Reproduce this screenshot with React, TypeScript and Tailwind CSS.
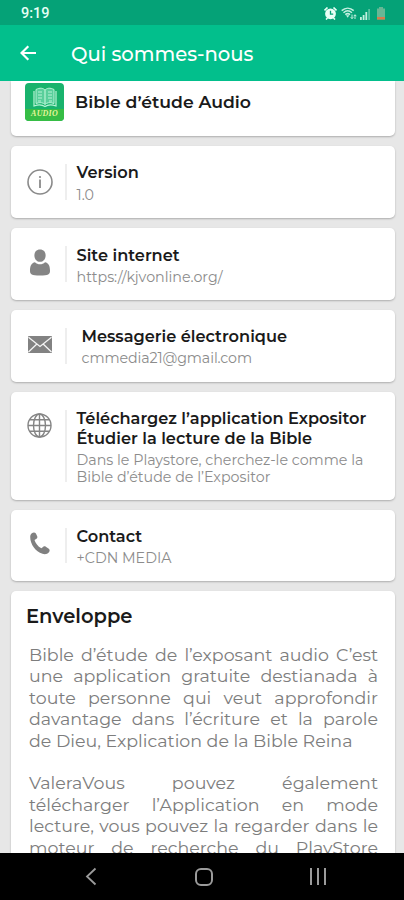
import type { ReactNode } from "react";

function InfoIcon() {
  return (
    <svg width="26" height="26" viewBox="0 0 26 26" fill="none" stroke="#8a8a8a">
      <circle cx="13" cy="13" r="12" strokeWidth="1.6" />
      <path d="M13 10.500v8.500" strokeWidth="1.800" />
      <circle cx="13" cy="8" r="1.100" fill="#8a8a8a" stroke="none" />
    </svg>
  );
}

function PersonIcon() {
  return (
    <svg width="20" height="27" viewBox="0 0 20 27" fill="#858585">
      <path d="M10 .5c3.500 0 5.600 2.200 5.600 5.900 0 3.700-2.400 6.400-5.600 6.400S4.400 10.100 4.400 6.400C4.400 2.700 6.500.5 10 .5z" />
      <path d="M5 13.200c1.400 1.400 3.100 2 5 2s3.600-.6 5-2c3.600.7 5 3.500 5 8.500 0 3.500-1.500 4.800-10 4.800s-10-1.300-10-4.800c0-5 1.400-7.800 5-8.500z" />
    </svg>
  );
}

function MailIcon() {
  return (
    <svg width="24" height="17" viewBox="0 0 24 17">
      <rect width="24" height="17" rx="0.8" fill="#828282" />
      <path d="M.5 1.200 12 10.500 23.500 1.200M.5 16l8.100-7.800M23.500 16l-8.100-7.800" fill="none" stroke="#f4f4f4" strokeWidth="1.300" />
    </svg>
  );
}

function GlobeIcon() {
  return (
    <svg width="25" height="25" viewBox="0 0 25 25" fill="none" stroke="#858585" strokeWidth="1.400">
      <circle cx="12.500" cy="12.500" r="11.500" />
      <ellipse cx="12.500" cy="12.500" rx="6" ry="11.500" />
      <path d="M12.500 1v23M1 12.500h23M2.800 6.800h19.400M2.800 18.200h19.400" />
    </svg>
  );
}

function PhoneIcon() {
  return (
    <svg width="20" height="23" viewBox="0 0 20 23" fill="#808080">
      <path d="M1.800 1.300C3.200.2 5 .2 5.900 1.500l1.300 2.700c.4 1 .1 1.900-.7 2.500l-2 1.200c.9 3.200 3.300 6.300 6.900 8.400l1.900-1.500c.8-.6 1.700-.6 2.500-.1l3 2c1.100.9 1.100 2.400.2 3.500-1.500 1.900-3.900 2.400-6.500 1.600C5.500 19.500.2 12.100.2 4.900.2 3.300.8 2 1.800 1.300z" />
    </svg>
  );
}

function BookLogo() {
  return (
    <div className="mt-[2px] flex h-[38px] w-[39px] shrink-0 flex-col items-center overflow-hidden rounded-[4px] bg-[#19b36d]">
      <svg className="mt-[4px] shrink-0" width="26" height="22" viewBox="0 0 26 22" fill="none" stroke="#b9f3d6">
        <path d="M4 2.500C8 .5 11 1 13 3c2-2 5-2.500 9-.500v14c-4-1.500-7-1-9 1-2-2-5-2.500-9-1z" fill="#59cf9b" strokeWidth="1" />
        <path d="M2 4v15c4-1.500 8-1.500 11 .5 3-2 7-2 11-.5V4M13 3v14" strokeWidth="1.200" />
        <path d="M6 5h4M6 8h4M6 11h4M6 14h3M16 5h4M16 8h4M16 11h4M17 14h3" strokeWidth="1" />
      </svg>
      <div className="w-full bg-[#36bd45] pb-[3px] text-center font-['Liberation_Serif',serif] text-[8px] leading-[9px] font-bold italic tracking-[0.2px] text-[#e5f59a]">
        AUDIO
      </div>
    </div>
  );
}

function StatusIcons() {
  return (
    <div className="flex items-center gap-[4px]">
      <svg width="13" height="13" viewBox="0 0 13 13">
        <path d="M.5 3.500 3.500.5M12.500 3.500 9.500.5M2 12.500 3.500 11M11 12.500 9.500 11" stroke="#e9fff6" strokeWidth="1.600" />
        <circle cx="6.500" cy="6.800" r="5.400" fill="#e9fff6" />
        <path d="M6.500 3.800v3.400h2.700" fill="none" stroke="#05a277" strokeWidth="1.300" />
      </svg>
      <svg width="16" height="13" viewBox="0 0 16 13" fill="none" stroke="#c4f0e0" strokeWidth="1.500">
        <path d="M.7 3.600c3.600-3.300 8.400-3.300 12 0M2.500 5.700c2.600-2.300 5.800-2.300 8.400 0M4.300 7.600c1.500-1.200 3.300-1.200 4.800 0" />
        <path d="M5 8.300h3.400L6.700 10.800z" fill="#c4f0e0" stroke="none" />
        <path d="M11 7.500v4M9.700 10.200l1.300 1.500 1.300-1.500M14 12V8M12.700 9.200 14 7.700l1.300 1.500" strokeWidth="1" />
      </svg>
      <svg className="-ml-[2px]" width="12" height="12" viewBox="0 0 12 12">
        <path d="M1 9h1.800v3H1zM3.700 7h1.800v5H3.700zM6.400 4h1.800v8H6.400z" fill="#c4f0e0" />
        <path d="M9.200 1H11v11H9.200z" fill="#57c3a2" />
      </svg>
      <svg className="ml-[1px]" width="10" height="13" viewBox="0 0 10 13">
        <path d="M3 0h4v1.500h2V12.500H1V1.500h2z" fill="#67b795" />
        <path d="M1 10h8v2.500H1z" fill="#d97a4b" />
      </svg>
    </div>
  );
}

type InfoCardProps = {
  icon: ReactNode;
  className: string;
  iconClass: string;
  children: ReactNode;
};

function InfoCard({ icon, className, iconClass, children }: InfoCardProps) {
  return (
    <section className={`flex shrink-0 rounded-[5px] bg-white shadow-[0_1px_2px_rgba(0,0,0,0.25)] ${className}`}>
      <div className={`flex w-[54px] shrink-0 justify-center pr-px pl-[4px] ${iconClass}`}>{icon}</div>
      <div className="my-[18px] w-[2px] shrink-0 bg-[#eeeeee]" />
      <div className="pt-[16px] pl-[9.5px] whitespace-nowrap">{children}</div>
    </section>
  );
}

const title = "text-[16.2px] leading-[20px] font-semibold text-[#1a1a1a]";
const sub = "text-[14.25px] text-[#8c8c8c]";

export default function App() {
  return (
    <div className="flex h-[900px] w-[404px] flex-col overflow-hidden bg-[#e7e7e7] font-[Montserrat,Inter,sans-serif]">
      {/* Status bar */}
      <div className="flex h-[25px] shrink-0 items-center justify-between bg-[#05a277] pt-[2px] pr-[18px] pl-[21px]">
        <span className="font-[Roboto,sans-serif] text-[14.5px] font-medium text-[#e6fff5]">9:19</span>
        <StatusIcons />
      </div>

      {/* App bar */}
      <header className="flex h-[56px] shrink-0 items-center bg-[#02bf8c] pl-[20px]">
        <svg width="17" height="16" viewBox="0 0 17 16" fill="none" stroke="#fff" strokeWidth="2.200">
          <path d="M16 8H2M8.300 1.200 1.500 8l6.800 6.800" />
        </svg>
        <h1 className="mt-[2px] ml-[34px] text-[19.6px] leading-[26px] font-medium text-white">Qui sommes-nous</h1>
      </header>

      {/* Scrolled content */}
      <main className="flex min-h-0 flex-1 flex-col gap-[10px] overflow-hidden pr-[9px] pl-[11px]">
        <section className="flex h-[55px] shrink-0 rounded-b-[5px] bg-white pl-[14px] shadow-[0_1px_2px_rgba(0,0,0,0.25)]">
          <BookLogo />
          <h2 className="mt-[11px] ml-[11px] text-[17.3px] leading-[20px] font-semibold text-[#1a1a1a]">Bible d’étude Audio</h2>
        </section>

        <InfoCard icon={<InfoIcon />} className="h-[72px]" iconClass="pt-[23px]">
          <h2 className={title}>Version</h2>
          <p className={`${sub} mt-[4px] leading-[18px]`}>1.0</p>
        </InfoCard>

        <InfoCard icon={<PersonIcon />} className="h-[72px]" iconClass="pt-[21px]">
          <h2 className={`${title} mt-px`}>Site internet</h2>
          <p className={`${sub} mt-[3px] leading-[18px]`}>https://kjvonline.org/</p>
        </InfoCard>

        <InfoCard icon={<MailIcon />} className="h-[72px]" iconClass="pt-[26px]">
          <h2 className={`${title} ml-[5px]`}>Messagerie électronique</h2>
          <p className={`${sub} mt-[3px] ml-[5px] leading-[18px] tracking-[-0.1px]`}>cmmedia21@gmail.com</p>
        </InfoCard>

        <InfoCard icon={<GlobeIcon />} className="h-[108px]" iconClass="pt-[21px]">
          <h2 className={title}>
            Téléchargez l’application Expositor
            <br />
            Étudier la lecture de la Bible
          </h2>
          <p className={`${sub} mt-[4px] leading-[17px]`}>
            Dans le Playstore, cherchez-le comme la
            <br />
            Bible d’étude de l’Expositor
          </p>
        </InfoCard>

        <InfoCard icon={<PhoneIcon />} className="h-[71px]" iconClass="pt-[22px]">
          <h2 className={title}>Contact</h2>
          <p className={`${sub} mt-[3px] leading-[18px]`}>+CDN MEDIA</p>
        </InfoCard>

        <section className="h-[300px] shrink-0 rounded-[5px] bg-white pt-[12px] pr-[17px] pl-[18px] shadow-[0_1px_2px_rgba(0,0,0,0.25)]">
          <h2 className="-ml-[3px] text-[19.5px] leading-[26px] font-semibold text-[#1a1a1a]">Enveloppe</h2>
          <div className="mt-[15px] text-[17.45px] leading-[21.4px] whitespace-nowrap text-[#7d7d7d] *:text-justify *:[text-align-last:justify]">
            <p>Bible d’étude de l’exposant audio C’est</p>
            <p>une application gratuite destianada à</p>
            <p>toute personne qui veut approfondir</p>
            <p>davantage dans l’écriture et la parole</p>
            <p className="[text-align-last:left]!">de Dieu, Explication de la Bible Reina</p>
            <p className="mt-[21.4px]">ValeraVous pouvez également</p>
            <p>télécharger l’Application en mode</p>
            <p>lecture, vous pouvez la regarder dans le</p>
            <p>moteur de recherche du PlayStore</p>
          </div>
        </section>
      </main>

      {/* Navigation bar */}
      <nav className="flex h-[47px] shrink-0 items-center bg-black pl-[85px]">
        <svg width="12" height="19" viewBox="0 0 12 19" fill="none" stroke="#9b9b9b" strokeWidth="1.800">
          <path d="M10.500 1.500 2 9.500l8.500 8" />
        </svg>
        <div className="ml-[98px] h-[18px] w-[18px] rounded-[6px] border-2 border-[#9b9b9b]" />
        <div className="ml-[97px] flex gap-[5px]">
          <div className="h-[17px] w-[2px] bg-[#9b9b9b]" />
          <div className="h-[17px] w-[2px] bg-[#9b9b9b]" />
          <div className="h-[17px] w-[2px] bg-[#9b9b9b]" />
        </div>
      </nav>
    </div>
  );
}
